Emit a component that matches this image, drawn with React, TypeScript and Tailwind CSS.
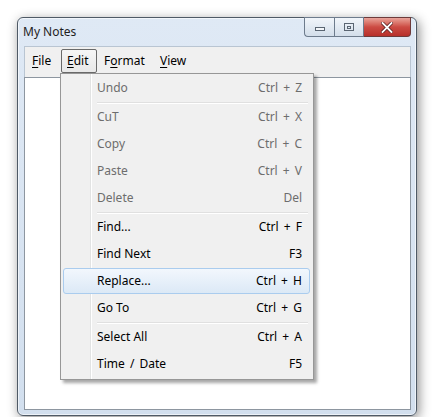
import React from 'react';

type Row =
    | { kind: 'item'; label: string; shortcut: string; disabled?: boolean; active?: boolean; wide?: boolean }
    | { kind: 'sep' };

const rows: Row[] = [
    { kind: 'item', label: 'Undo', shortcut: 'Ctrl + Z', disabled: true },
    { kind: 'sep' },
    { kind: 'item', label: 'CuT', shortcut: 'Ctrl + X', disabled: true },
    { kind: 'item', label: 'Copy', shortcut: 'Ctrl + C', disabled: true },
    { kind: 'item', label: 'Paste', shortcut: 'Ctrl + V', disabled: true },
    { kind: 'item', label: 'Delete', shortcut: 'Del', disabled: true },
    { kind: 'sep' },
    { kind: 'item', label: 'Find...', shortcut: 'Ctrl + F' },
    { kind: 'item', label: 'Find Next', shortcut: 'F3' },
    { kind: 'item', label: 'Replace...', shortcut: 'Ctrl + H', active: true },
    { kind: 'item', label: 'Go To', shortcut: 'Ctrl + G' },
    { kind: 'sep' },
    { kind: 'item', label: 'Select All', shortcut: 'Ctrl + A' },
    { kind: 'item', label: 'Time / Date', shortcut: 'F5', wide: true },
];

const CaptionButtons = () => (
    <div className="flex h-[20px] -mt-[1px]">
        <div className="w-[30px] h-full flex items-center justify-center border border-[#6d7b8c] border-r-0 rounded-bl-[4px] bg-gradient-to-b from-[#f1f5fa] to-[#d3deea]">
            <div className="w-[10px] h-[4px] border border-[#5a6572] mt-[4px] bg-white/60" />
        </div>
        <div className="w-[30px] h-full flex items-center justify-center border border-[#6d7b8c] bg-gradient-to-b from-[#f1f5fa] to-[#d3deea]">
            <div className="w-[10px] h-[8px] border border-[#5a6572] flex items-center justify-center">
                <div className="w-[4px] h-[3px] border border-[#5a6572]" />
            </div>
        </div>
        <div className="w-[47px] h-full flex items-center justify-center border border-[#6d3a3a] border-l-0 rounded-br-[4px] bg-gradient-to-b from-[#e8a39a] via-[#cc4b43] to-[#b7302b]">
            <svg width="12" height="11" viewBox="0 0 12 11">
                <path d="M1.5 1 L10.5 10 M10.5 1 L1.5 10" stroke="#5a1f1f" strokeWidth="3.4" strokeLinecap="square" />
                <path d="M1.5 1 L10.5 10 M10.5 1 L1.5 10" stroke="#ffffff" strokeWidth="1.8" strokeLinecap="square" />
            </svg>
        </div>
    </div>
);

const EditMenu = () => (
    <div className="absolute left-[60px] top-[73px] w-[254px] h-[307px] bg-[#f0f0f0] border border-[#979797] shadow-[3px_3px_3px_rgba(0,0,0,0.35)] py-[1px]">
        <div className="absolute left-[29px] top-0 bottom-0 w-[1px] bg-[#e2e3e3]" />
        <div className="absolute left-[30px] top-0 bottom-0 w-[1px] bg-white" />
        {rows.map((r, i) =>
            r.kind === 'sep' ? (
                <div key={i} className="h-[2px] ml-[36px] mr-[5px] relative">
                    <div className="h-[1px] bg-[#e0e0e0]" />
                    <div className="h-[1px] bg-white" />
                </div>
            ) : (
                <div key={i} className="h-[27px] relative flex items-center">
                    {r.active && (
                        <div className="absolute left-[2px] right-[3px] top-0 bottom-[1px] rounded-[3px] border border-[#aaccee] bg-gradient-to-b from-[#f2f7fd] to-[#dce9f6]" />
                    )}
                    <div
                        className={`relative flex-1 flex justify-between pl-[36px] pr-[11px] text-[12px] -mt-[1px] ${
                            r.disabled ? 'text-[#6d6d6d]' : 'text-[#000000]'
                        }`}
                    >
                        <span className={r.wide ? '[word-spacing:2px]' : ''}>{r.label}</span>
                        <span className="[word-spacing:2px]">{r.shortcut}</span>
                    </div>
                </div>
            )
        )}
    </div>
);

export default function App() {
    return (
        <div
            className="relative w-[434px] h-[417px] bg-white pl-[17px] pt-[17px]"
            style={{ fontFamily: '"Noto Sans", "Open Sans", sans-serif' }}
        >
            <div className="w-[400px] h-[399px] rounded-[6px] border border-[#4f5a66] bg-gradient-to-b from-[#dfe9f5] to-[#d2dfee] shadow-[2px_3px_12px_rgba(0,0,0,0.45),inset_0_0_0_1px_rgba(255,255,255,0.6)] flex flex-col">
                <div className="h-[28px] flex items-start justify-between pl-[5px] pr-[5px]">
                    <span className="mt-[5px] text-[12px] text-[#1e1e1e]">My Notes</span>
                    <CaptionButtons />
                </div>
                <div className="mx-[5px] ml-[6px] h-[364px] flex flex-col border border-[#b9c5d2] bg-[#f0f0f0]">
                    <div className="h-[30px] flex items-start pl-[7px] pt-[2px] text-[12px] text-black">
                        <div className="w-[29px] h-[24px] flex items-center">
                            <span><u className="underline-offset-2">F</u>ile</span>
                        </div>
                        <div className="w-[36px] h-[24px] flex items-center pl-[5px] border border-[#6a6a6a] rounded-[2px] bg-gradient-to-b from-[#f6f6f6] to-[#e8e8e8]">
                            <span><u className="underline-offset-2">E</u>dit</span>
                        </div>
                        <div className="ml-[7px] w-[56px] h-[24px] flex items-center">
                            <span>F<u className="underline-offset-2">o</u>rmat</span>
                        </div>
                        <div className="h-[24px] flex items-center">
                            <span><u className="underline-offset-2">V</u>iew</span>
                        </div>
                    </div>
                    <div className="flex-1 bg-white border border-[#8d96a0] mx-[-1px] mb-[-1px]" />
                </div>
            </div>
            <EditMenu />
        </div>
    );
}
